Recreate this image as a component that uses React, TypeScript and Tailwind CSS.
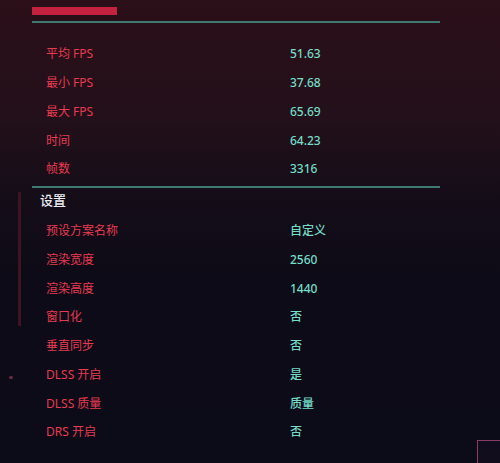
const stats = [
  ['平均 FPS', '51.63'],
  ['最小 FPS', '37.68'],
  ['最大 FPS', '65.69'],
  ['时间', '64.23'],
  ['帧数', '3316'],
]

const settings = [
  ['预设方案名称', '自定义'],
  ['渲染宽度', '2560'],
  ['渲染高度', '1440'],
  ['窗口化', '否'],
  ['垂直同步', '否'],
  ['DLSS 开启', '是'],
  ['DLSS 质量', '质量'],
  ['DRS 开启', '否'],
]

function Row({ label, value }: { label: string; value: string }) {
  return (
    <div className="flex h-[28.75px] items-center pl-[14px]">
      <span className="w-[244px] text-[12px] text-[#e83a52]">{label}</span>
      <span className="text-[12px] font-medium text-[#74dcc7]">{value}</span>
    </div>
  )
}

export default function App() {
  return (
    <div
      className="relative h-[463px] w-[500px] overflow-hidden bg-[linear-gradient(180deg,#2b0f19_0%,#23101a_25%,#150d18_42%,#0d0b17_60%,#0c0b18_100%)]"
      style={{ fontFamily: '"Noto Sans", "Noto Sans CJK SC", sans-serif' }}
    >
      {/* left rail */}
      <div className="absolute left-[18px] top-[192px] h-[134px] w-[3px] bg-[#3e1322]" />
      <div className="absolute left-[9px] top-[376px] h-[3px] w-[4px] rounded-full bg-[#6a2a40]" />
      {/* bottom right frame */}
      <div className="absolute left-[477px] top-[440px] h-[40px] w-[40px] border border-[#8c3a66] bg-[#120d1d]" />

      <div className="ml-[32px] w-[408px]">
        <div className="mt-[7px] h-[8px] w-[85px] bg-[#c4223f]" />
        <div className="mt-[6px] h-[2px] bg-[#3f7a72]" />

        <div className="mt-[17px]">
          {stats.map(([l, v]) => (
            <Row key={l} label={l} value={v} />
          ))}
        </div>

        <div className="mt-[2px] h-[2px] bg-[#3f7a72]" />
        <div className="flex h-[26px] items-center pl-[8px]">
          <span className="text-[13px] font-medium text-[#ececf2]">设置</span>
        </div>
        <div className="mt-[3px]">
          {settings.map(([l, v]) => (
            <Row key={l} label={l} value={v} />
          ))}
        </div>
      </div>
    </div>
  )
}
